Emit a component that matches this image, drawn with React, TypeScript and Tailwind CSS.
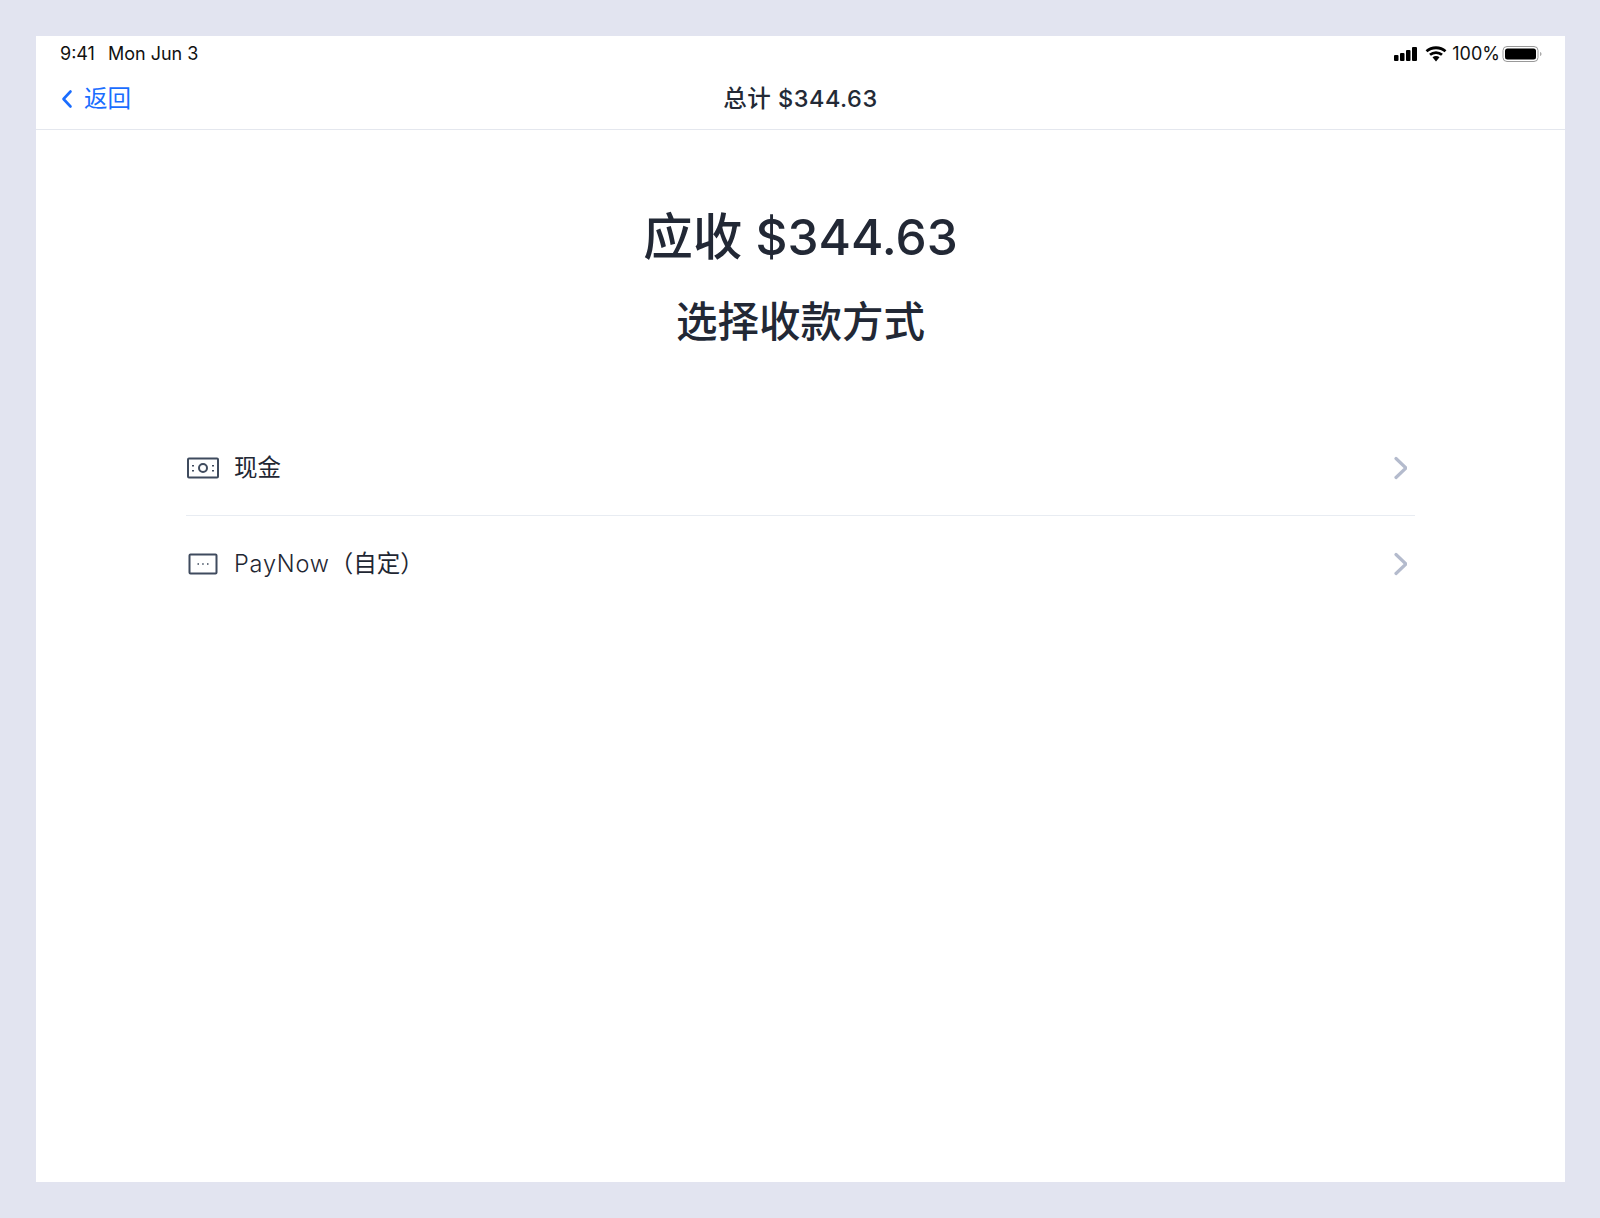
import React from 'react';

const FONT = "font-['Inter','Noto_Sans_CJK_SC',sans-serif]";

const StatusIcons = () => (
  <div className="flex items-center">
    <svg width="26" height="16" viewBox="0 0 26 16" className="mr-[6px]">
      <rect x="1" y="9" width="4.500" height="6" rx="1" fill="#000" />
      <rect x="7" y="7" width="4.500" height="8" rx="1" fill="#000" />
      <rect x="13" y="4" width="4.500" height="11" rx="1" fill="#000" />
      <rect x="19" y="1" width="5" height="14" rx="1" fill="#000" />
    </svg>
    <svg width="22" height="16" viewBox="0 0 22 16" className="mr-[5px]">
      <path d="M1.500 5.200C6.800.6 15.200.6 20.500 5.200" fill="none" stroke="#000" strokeWidth="2.800" />
      <path d="M5 8.800c3.500-3 8.500-3 12 0" fill="none" stroke="#000" strokeWidth="2.800" />
      <path d="M7.500 11.200c2-1.500 5-1.500 7 0L11 15.500z" fill="#000" />
    </svg>
    <span className="text-[18px] leading-none text-[#111]">100%</span>
    <svg width="42" height="18" viewBox="0 0 42 18" className="ml-[2px]">
      <rect x="1" y="1.500" width="35" height="15" rx="4" fill="none" stroke="#999" strokeWidth="1" />
      <rect x="3" y="3.500" width="31" height="11" rx="2.500" fill="#000" />
      <path d="M38 7v4c1-.3 1.500-1 1.500-2s-.5-1.700-1.500-2z" fill="#aaa" />
    </svg>
  </div>
);

const CashIcon = () => (
  <svg width="34" height="24" viewBox="0 0 34 24" fill="none" stroke="#3f4b5e" strokeWidth="2">
    <rect x="2" y="2.500" width="30" height="19" rx="1" />
    <circle cx="17" cy="12" r="4" />
    <path d="M7 9v1.500M7 14v1.500M27 9v1.500M27 14v1.500" strokeWidth="2" />
  </svg>
);

const CustomIcon = () => (
  <svg width="34" height="24" viewBox="0 0 34 24" fill="none" stroke="#3f4b5e" strokeWidth="2">
    <rect x="3.500" y="2.500" width="27" height="19" rx="1" />
    <path d="M11.500 12h1.500M16.200 12h1.500M21 12h1.500" strokeWidth="1.600" />
  </svg>
);

const Chevron = () => (
  <svg width="16" height="24" viewBox="0 0 16 24" fill="none" stroke="#b4bbcd" strokeWidth="3.200" strokeLinecap="round" strokeLinejoin="round">
    <path d="M5 2.500 15 12 5 21.500" />
  </svg>
);

const PaymentRow = ({ icon, children, last }: { icon: React.ReactNode; children: React.ReactNode; last?: boolean }) => (
  <div className={`flex h-[96px] items-center pr-[8px] ${last ? '' : 'border-b border-[#e8ecf2]'}`}>
    <div className="flex w-[48px] shrink-0">{icon}</div>
    <div className="flex-1 text-[23.5px] text-[#1f2733]">{children}</div>
    <Chevron />
  </div>
);

export default function App() {
  return (
    <div className={`h-[1218px] w-[1600px] bg-[#e2e4f0] px-[36px] pt-[36px] ${FONT}`}>
      <div className="flex h-[1146px] w-[1529px] flex-col bg-white">
        <div className="flex h-[36px] items-center justify-between pl-[24px] pr-[21px]">
          <div className="text-[18px] leading-none text-[#111]">
            <span>9:41</span>
            <span className="ml-[13px]">Mon Jun 3</span>
          </div>
          <StatusIcons />
        </div>
        <div className="relative flex h-[58px] items-center justify-center border-b border-[#e4e7ee]">
          <div className="absolute left-[25px] top-[13px] flex items-center text-[#1a6dff]">
            <svg width="12" height="20" viewBox="0 0 12 20" fill="none" stroke="#1a6dff" strokeWidth="2.600" strokeLinecap="round" strokeLinejoin="round">
              <path d="M9.500 2.500 2.500 10l7 7.500" />
            </svg>
            <span className="ml-[11px] text-[23.5px] leading-[28px]">返回</span>
          </div>
          <span className="-mt-[4px] text-[23.5px] font-medium tracking-[0.5px] text-[#232a36]">总计 $344.63</span>
        </div>
        <div className="px-[150px]">
          <h1 className="mt-[75px] text-center text-[49.5px] font-medium leading-[64px] text-[#222835]">应收 $344.63</h1>
          <h2 className="mt-[29px] text-center text-[41.5px] font-medium leading-[48px] text-[#222835]">选择收款方式</h2>
          <div className="mt-[74px]">
            <PaymentRow icon={<CashIcon />}>现金</PaymentRow>
            <PaymentRow icon={<CustomIcon />} last>
              <span className="font-light tracking-[0.8px]">PayNow</span>
              <span>（自定）</span>
            </PaymentRow>
          </div>
        </div>
      </div>
    </div>
  );
}
